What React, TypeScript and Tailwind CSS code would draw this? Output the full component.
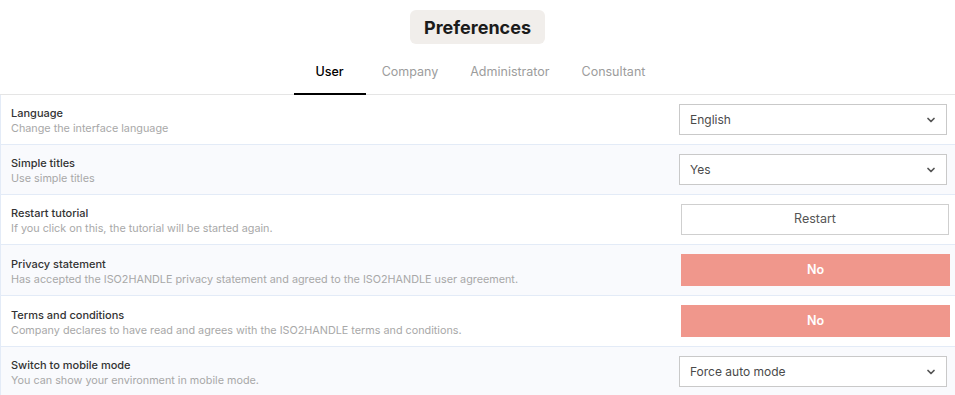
import { ChevronDown } from "lucide-react";

type Row = {
	title: string;
	description: string;
	control: "select" | "button" | "no";
	value: string;
};

const rows: Row[] = [
	{ title: "Language", description: "Change the interface language", control: "select", value: "English" },
	{ title: "Simple titles", description: "Use simple titles", control: "select", value: "Yes" },
	{ title: "Restart tutorial", description: "If you click on this, the tutorial will be started again.", control: "button", value: "Restart" },
	{ title: "Privacy statement", description: "Has accepted the ISO2HANDLE privacy statement and agreed to the ISO2HANDLE user agreement.", control: "no", value: "No" },
	{ title: "Terms and conditions", description: "Company declares to have read and agrees with the ISO2HANDLE terms and conditions.", control: "no", value: "No" },
	{ title: "Switch to mobile mode", description: "You can show your environment in mobile mode.", control: "select", value: "Force auto mode" },
];

const tabs = ["User", "Company", "Administrator", "Consultant"];

const Control = ({ row }: { row: Row }) => {
	if (row.control === "select") {
		return (
			<div className="flex h-[31px] w-[268px] items-center justify-between border border-[#c9c9c9] bg-white pl-[10px] pr-[9px] text-[12px] text-[#4a4a4a]">
				<span>{row.value}</span>
				<ChevronDown size={12} strokeWidth={3.5} className="text-[#555]" />
			</div>
		);
	}
	if (row.control === "button") {
		return (
			<div className="-mr-[2px] flex h-[31px] w-[268px] items-center justify-center border border-[#cfcfcf] bg-white text-[12.5px] text-[#555]">
				{row.value}
			</div>
		);
	}
	return (
		<div className="-mr-[3px] flex h-[32px] w-[269px] items-center justify-center bg-[#f0978c] text-[12.5px] font-semibold text-white">
			{row.value}
		</div>
	);
};

export default function App() {
	return (
		<div className="min-h-[395px] w-[955px] overflow-hidden bg-white font-['Inter',sans-serif]">
			<div className="flex justify-center pt-[10px]">
				<div className="flex h-[34px] items-center rounded-[6px] bg-[#f1eeeb] px-[14px] text-[18px] font-bold text-[#1b1b1b]">
					Preferences
				</div>
			</div>

			<div className="mt-[9px] flex justify-center border-b border-[#e5e5e5]">
				{tabs.map((tab, i) => (
					<div
						key={tab}
						className={
							i === 0
								? "-mb-px min-w-[72px] border-b-2 border-black px-4 pt-[11px] pb-[13px] text-center text-[12.5px] leading-[16px] font-medium text-black"
								: "-mb-px min-w-[72px] border-b-2 border-transparent px-4 pt-[11px] pb-[13px] text-center text-[12.5px] leading-[16px] text-[#9c9c9c]"
						}
					>
						{tab}
					</div>
				))}
			</div>

			<div className="border-l border-[#e3ebf7]">
				{rows.map((row, i) => (
					<div
						key={row.title}
						className={`flex items-center justify-between border-b border-[#e3ebf7] pl-[10px] pr-[8px] ${
							row.control === "no" ? "h-[51px]" : "h-[50px]"
						} ${i % 2 === 1 ? "bg-[#f9fafd]" : "bg-white"}`}
					>
						<div className="flex flex-col pt-[3px]">
							<span className="text-[11px] leading-[16px] font-medium text-[#333]">{row.title}</span>
							<span className="text-[10.8px] leading-[16px] text-[#a8a8a8]">{row.description}</span>
						</div>
						<Control row={row} />
					</div>
				))}
			</div>
		</div>
	);
}
